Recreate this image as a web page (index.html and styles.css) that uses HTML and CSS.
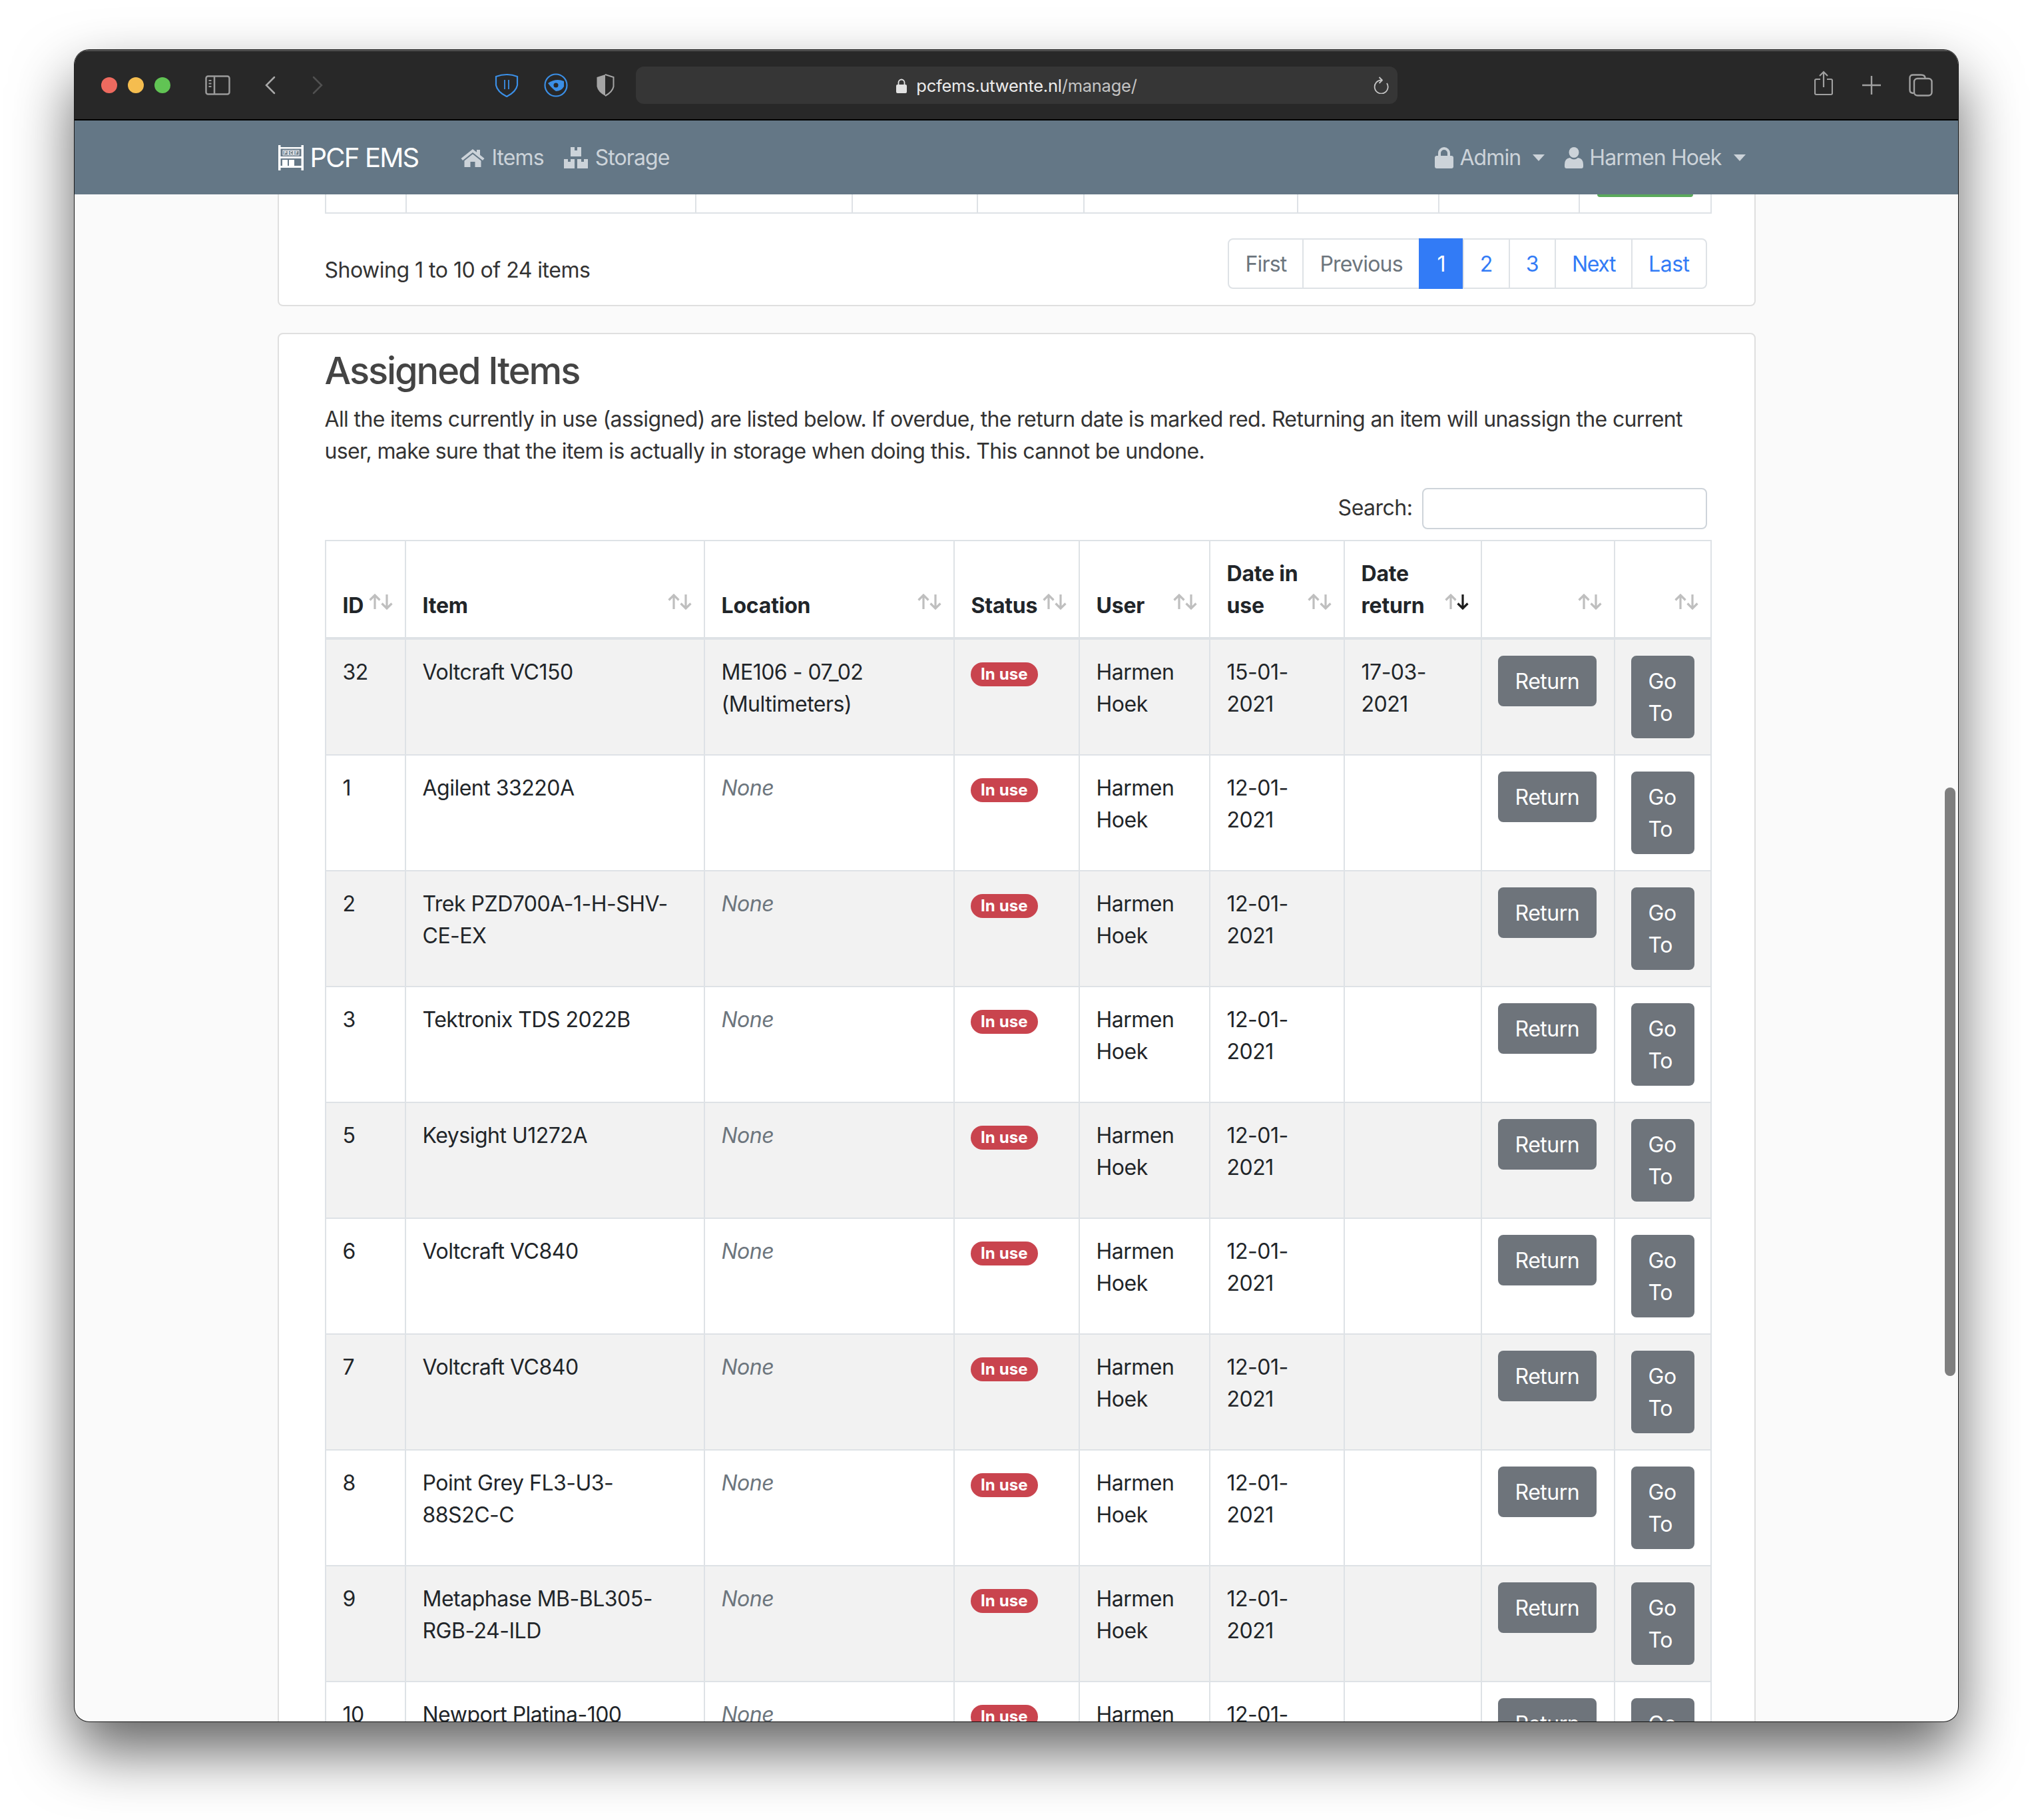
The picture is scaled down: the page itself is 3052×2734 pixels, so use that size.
FILE: index.html
```html
<!DOCTYPE html>
<html lang="en">
<head>
    <meta charset="UTF-8">
    <title>PCF EMS - Manage</title>
    <link rel="stylesheet" href="styles.css">
</head>
<body>
<div class="window">
    <!-- safari toolbar -->
    <div class="toolbar">
        <span class="light light-red"></span>
        <span class="light light-yellow"></span>
        <span class="light light-green"></span>
        <svg class="tb-sidebar" viewBox="0 0 38 30" fill="none" stroke="#9a9a9a" stroke-width="2.5"><rect x="1.5" y="1.5" width="35" height="27" rx="3"/><path d="M14 1.5v27"/><path d="M5.5 8h4M5.5 12.500h4M5.500 17h4" stroke-width="2"/></svg>
        <svg class="tb-back" viewBox="0 0 16 28" fill="none" stroke="#a8a8a8" stroke-width="2.5" stroke-linecap="round"><path d="M14 2 2 14l12 12"/></svg>
        <svg class="tb-forward" viewBox="0 0 16 28" fill="none" stroke="#505050" stroke-width="2.5" stroke-linecap="round"><path d="m2 2 12 12L2 26"/></svg>
        <svg class="tb-shield" viewBox="0 0 36 36" fill="none" stroke="#3b8fe6" stroke-width="2.2"><path d="M2 5q16-6 32 0v13q-2 10-16 17Q4 28 2 18z"/><path d="M15 10v14M21 10v14" stroke-width="1.800"/></svg>
        <svg class="tb-eye" viewBox="0 0 36 36" fill="none"><circle cx="18" cy="18" r="16.500" stroke="#3b8fe6" stroke-width="2.200"/><path d="M6 15q12-8 24-3v8q-4 7-12 7-6-4-12-12z" fill="#3b8fe6"/><circle cx="18" cy="18" r="3.500" fill="#282828"/></svg>
        <svg class="tb-half" viewBox="0 0 28 34" fill="none"><path d="M14 1 1.500 5v14Q3 27 14 33z" fill="#a5a5a5"/><path d="M14 1l12.500 4v14Q25 27 14 33" stroke="#a5a5a5" stroke-width="2"/></svg>
        <div class="address">
            <svg class="addr-lock" viewBox="0 0 16 22"><path d="M3.500 10V6a4.500 4.500 0 0 1 9 0v4" fill="none" stroke="#e2e2e2" stroke-width="1.800"/><rect y="9" width="16" height="13" rx="2" fill="#e2e2e2"/></svg>
            <span class="addr-text">pcfems.utwente.nl<span class="addr-path">/manage/</span></span>
            <svg class="addr-reload" viewBox="0 0 24 26" fill="none" stroke="#c4c4c4" stroke-width="1.800"><path d="M13 5.500A10 10 0 1 0 21 10"/><path d="m9.500 1 4.500 4.500-4.500 4.500" stroke-linejoin="round"/></svg>
        </div>
        <svg class="tb-share" viewBox="0 0 28 38" fill="none" stroke="#a0a0a0" stroke-width="2.200"><path d="M9 13H3a2 2 0 0 0-2 2v19a2 2 0 0 0 2 2h22a2 2 0 0 0 2-2V15a2 2 0 0 0-2-2h-6"/><path d="M14 25V2M8 8l6-6 6 6"/></svg>
        <svg class="tb-plus" viewBox="0 0 28 28" stroke="#a0a0a0" stroke-width="2.400"><path d="M14 0v28M0 14h28"/></svg>
        <svg class="tb-tabs" viewBox="0 0 36 34" fill="none" stroke="#a0a0a0" stroke-width="2.400"><path d="M7 29q-5.500 0-5.500-5V6q0-4.500 5-4.500h12q6 0 6 5"/><rect x="8" y="7" width="26.500" height="25.500" rx="5"/></svg>
    </div>

    <nav class="navbar">
        <div class="nav-inner">
            <a class="brand" href="#">
                <svg class="brand-icon" viewBox="0 0 38 38" fill="#fff">
                    <path d="M0 0h3.500v38H0zM34.500 0H38v38h-3.500zM3 3h32v2.500H3zM3 17h32v3H3zM3 31h32v3H3z"/>
                    <rect x="7" y="8" width="7" height="7" fill="none" stroke="#fff"/><rect x="15.500" y="8" width="7" height="7" fill="none" stroke="#fff"/><rect x="24" y="8" width="7" height="7" fill="none" stroke="#fff"/>
                    <text x="8.500" y="14" class="brand-letter">P</text><text x="17" y="14" class="brand-letter">C</text><text x="25.500" y="14" class="brand-letter">F</text>
                    <rect x="6" y="22" width="8" height="9"/><rect x="16" y="22" width="8" height="9"/>
                </svg>
                PCF EMS
            </a>
            <a class="nav-link" href="#">
                <svg class="icon-home" viewBox="0 0 36 28" fill="currentColor"><path d="M18 1 .5 15 3 18 18 6l15 12 2.500-3-6.500-5.200V2h-5v3.800z"/><path d="M18 8.500 5.500 18.500V28h9v-8h7v8h9v-9.500z"/></svg>
                Items
            </a>
            <a class="nav-link" href="#">
                <svg class="icon-cubes" viewBox="0 0 36 32" fill="currentColor"><path d="M10 0h6v5h4V0h6v14H10zM0 18h6v4h4v-4h6v14H0zM20 18h6v4h4v-4h6v14H20z"/></svg>
                Storage
            </a>
            <div class="nav-right">
                <a class="nav-link" href="#">
                    <svg class="icon-lock" viewBox="0 0 28 32" fill="currentColor"><path d="M7 14V9a7 7 0 0 1 14 0v5" fill="none" stroke="currentColor" stroke-width="4"/><rect y="13" width="28" height="19" rx="3"/></svg>
                    Admin<span class="caret"></span>
                </a>
                <a class="nav-link" href="#">
                    <svg class="icon-user" viewBox="0 0 28 32" fill="currentColor"><ellipse cx="14" cy="8" rx="7.500" ry="8"/><path d="M8 16q6 5 12 0 8 1 8 10v3q0 3-3 3H3q-3 0-3-3v-3q0-9 8-10z"/></svg>
                    Harmen Hoek<span class="caret"></span>
                </a>
            </div>
        </div>
    </nav>

    <div class="content">
        <div class="card card-top">
            <table class="stub-table">
                <tr>
                    <td class="s1"></td><td class="s2"></td><td class="s3"></td><td class="s4"></td><td class="s5"></td><td class="s6"></td><td class="s7"></td><td class="s8"></td><td class="s9"><div class="stub-btn"></div></td>
                </tr>
            </table>
            <div class="table-footer">
                <div class="pagination-info">Showing 1 to 10 of 24 items</div>
                <ul class="pagination">
                    <li class="disabled"><a href="#">First</a></li>
                    <li class="disabled"><a href="#">Previous</a></li>
                    <li class="active"><a href="#">1</a></li>
                    <li><a href="#">2</a></li>
                    <li><a href="#">3</a></li>
                    <li class="next"><a href="#">Next</a></li>
                    <li><a href="#">Last</a></li>
                </ul>
            </div>
        </div>

        <div class="card card-assigned">
            <h3>Assigned Items</h3>
            <p>All the items currently in use (assigned) are listed below. If overdue, the return date is marked red. Returning an item will unassign the current user, make sure that the item is actually in storage when doing this. This cannot be undone.</p>
            <div class="search-row">
                <label for="search">Search:</label>
                <input type="text" id="search">
            </div>
            <table class="items-table">
                <colgroup>
                    <col class="c-id"><col class="c-item"><col class="c-location"><col class="c-status"><col class="c-user"><col class="c-inuse"><col class="c-return"><col class="c-btn"><col class="c-goto">
                </colgroup>
                <thead>
                    <tr>
                        <th>ID<svg class="sort" viewBox="0 0 36 24"><use href="#sort-up"/><use href="#sort-down"/></svg></th>
                        <th>Item<svg class="sort" viewBox="0 0 36 24"><use href="#sort-up"/><use href="#sort-down"/></svg></th>
                        <th>Location<svg class="sort" viewBox="0 0 36 24"><use href="#sort-up"/><use href="#sort-down"/></svg></th>
                        <th>Status<svg class="sort" viewBox="0 0 36 24"><use href="#sort-up"/><use href="#sort-down"/></svg></th>
                        <th>User<svg class="sort" viewBox="0 0 36 24"><use href="#sort-up"/><use href="#sort-down"/></svg></th>
                        <th>Date in use<svg class="sort" viewBox="0 0 36 24"><use href="#sort-up"/><use href="#sort-down"/></svg></th>
                        <th>Date return<svg class="sort sort-active" viewBox="0 0 36 24"><use href="#sort-up"/><use href="#sort-down"/></svg></th>
                        <th><svg class="sort" viewBox="0 0 36 24"><use href="#sort-up"/><use href="#sort-down"/></svg></th>
                        <th><svg class="sort" viewBox="0 0 36 24"><use href="#sort-up"/><use href="#sort-down"/></svg></th>
                    </tr>
                </thead>
                <tbody>
                    <tr><td>32</td><td>Voltcraft VC150</td><td>ME106 - 07_02 (Multimeters)</td><td><span class="badge">In use</span></td><td>Harmen Hoek</td><td>15-01-2021</td><td>17-03-2021</td><td class="btn-cell"><a class="btn" href="#">Return</a></td><td class="btn-cell"><a class="btn" href="#">Go To</a></td></tr>
                    <tr><td>1</td><td>Agilent 33220A</td><td class="none">None</td><td><span class="badge">In use</span></td><td>Harmen Hoek</td><td>12-01-2021</td><td></td><td class="btn-cell"><a class="btn" href="#">Return</a></td><td class="btn-cell"><a class="btn" href="#">Go To</a></td></tr>
                    <tr><td>2</td><td>Trek PZD700A-1-H-SHV-CE-EX</td><td class="none">None</td><td><span class="badge">In use</span></td><td>Harmen Hoek</td><td>12-01-2021</td><td></td><td class="btn-cell"><a class="btn" href="#">Return</a></td><td class="btn-cell"><a class="btn" href="#">Go To</a></td></tr>
                    <tr><td>3</td><td>Tektronix TDS 2022B</td><td class="none">None</td><td><span class="badge">In use</span></td><td>Harmen Hoek</td><td>12-01-2021</td><td></td><td class="btn-cell"><a class="btn" href="#">Return</a></td><td class="btn-cell"><a class="btn" href="#">Go To</a></td></tr>
                    <tr><td>5</td><td>Keysight U1272A</td><td class="none">None</td><td><span class="badge">In use</span></td><td>Harmen Hoek</td><td>12-01-2021</td><td></td><td class="btn-cell"><a class="btn" href="#">Return</a></td><td class="btn-cell"><a class="btn" href="#">Go To</a></td></tr>
                    <tr><td>6</td><td>Voltcraft VC840</td><td class="none">None</td><td><span class="badge">In use</span></td><td>Harmen Hoek</td><td>12-01-2021</td><td></td><td class="btn-cell"><a class="btn" href="#">Return</a></td><td class="btn-cell"><a class="btn" href="#">Go To</a></td></tr>
                    <tr><td>7</td><td>Voltcraft VC840</td><td class="none">None</td><td><span class="badge">In use</span></td><td>Harmen Hoek</td><td>12-01-2021</td><td></td><td class="btn-cell"><a class="btn" href="#">Return</a></td><td class="btn-cell"><a class="btn" href="#">Go To</a></td></tr>
                    <tr><td>8</td><td>Point Grey FL3-U3-88S2C-C</td><td class="none">None</td><td><span class="badge">In use</span></td><td>Harmen Hoek</td><td>12-01-2021</td><td></td><td class="btn-cell"><a class="btn" href="#">Return</a></td><td class="btn-cell"><a class="btn" href="#">Go To</a></td></tr>
                    <tr><td>9</td><td>Metaphase MB-BL305-RGB-24-ILD</td><td class="none">None</td><td><span class="badge">In use</span></td><td>Harmen Hoek</td><td>12-01-2021</td><td></td><td class="btn-cell"><a class="btn" href="#">Return</a></td><td class="btn-cell"><a class="btn" href="#">Go To</a></td></tr>
                    <tr><td>10</td><td>Newport Platina-100</td><td class="none">None</td><td><span class="badge">In use</span></td><td>Harmen Hoek</td><td>12-01-2021</td><td></td><td class="btn-cell"><a class="btn" href="#">Return</a></td><td class="btn-cell"><a class="btn" href="#">Go To</a></td></tr>
                </tbody>
            </table>
        </div>
    </div>

    <div class="scrollbar"></div>
</div>

<svg class="sprites" width="0" height="0">
    <defs>
        <path id="sort-up" d="M9 23V2M1.500 9.500 9 2l7.500 7.500"/>
        <path id="sort-down" d="M27 1v21M19.500 14.500 27 22l7.500-7.500"/>
    </defs>
</svg>
</body>
</html>
```

FILE: styles.css
```css
* {
    box-sizing: border-box;
}

html, body {
    height: 2734px;
    margin: 0;
    overflow: hidden;
    background-color: #ffffff;
}

body {
    padding: 75px 0 0 112px;
    font-family: Inter, "Liberation Sans", sans-serif;
    font-size: 32px;
    line-height: 48px;
    letter-spacing: -0.5px;
    color: #212529;
}

a {
    text-decoration: none;
}

.sprites {
    position: absolute;
}

/* window */

.window {
    position: relative;
    width: 2829px;
    height: 2511px;
    display: flex;
    flex-direction: column;
    overflow: hidden;
    border-radius: 22px;
    background-color: #fafafa;
    box-shadow: 0 0 0 1px rgba(0, 0, 0, 0.85), 0 44px 90px rgba(0, 0, 0, 0.62);
}

/* toolbar */

.toolbar {
    flex: none;
    height: 106px;
    display: flex;
    align-items: center;
    background-color: #282828;
    border-top: 2px solid #525252;
    border-bottom: 2px solid #000000;
    padding-left: 40px;
}

.light {
    width: 24px;
    height: 24px;
    border-radius: 50%;
    margin-right: 16px;
}

.light-red { background-color: #ee6a5f; }
.light-yellow { background-color: #f5bd4f; }
.light-green { background-color: #61c454; }

.tb-sidebar { width: 38px; height: 30px; margin-left: 36px; }
.tb-back { width: 16px; height: 28px; margin-left: 52px; }
.tb-forward { width: 16px; height: 28px; margin-left: 55px; }
.tb-shield { width: 36px; height: 36px; margin-left: 258px; }
.tb-eye { width: 36px; height: 36px; margin-left: 38px; }
.tb-half { width: 28px; height: 34px; margin-left: 42px; }

.address {
    width: 1144px;
    height: 56px;
    margin-left: 32px;
    padding-top: 2px;
    display: flex;
    align-items: center;
    justify-content: center;
    position: relative;
    border-radius: 12px;
    background-color: #363636;
    font-size: 25.5px;
    letter-spacing: -0.25px;
    color: #ececec;
}

.addr-lock {
    width: 16px;
    height: 22px;
    margin-right: 14px;
}

.addr-path {
    color: #c4c4c4;
}

.addr-reload {
    position: absolute;
    right: 13px;
    top: 15px;
    width: 24px;
    height: 26px;
}

.tb-share { width: 28px; height: 38px; margin-left: 626px; margin-top: -6px; }
.tb-plus { width: 28px; height: 28px; margin-left: 44px; }
.tb-tabs { width: 36px; height: 34px; margin-left: 42px; }

/* navbar */

.navbar {
    flex: none;
    height: 111px;
    background-color: #647786;
    display: flex;
    align-items: center;
}

.nav-inner {
    width: 2218px;
    margin: 0 auto;
    display: flex;
    align-items: center;
}

.brand {
    display: flex;
    align-items: center;
    font-size: 40px;
    letter-spacing: -1.8px;
    color: #ffffff;
    margin-right: 64px;
}

.brand-icon {
    width: 38px;
    height: 38px;
    margin-right: 10px;
}

.brand-letter {
    font-size: 6px;
    font-weight: 700;
    letter-spacing: 0;
    fill: #ffffff;
}

.nav-link {
    display: flex;
    align-items: center;
    letter-spacing: -0.9px;
    color: #ccd3d9;
    margin-right: 30px;
}

.nav-right {
    margin-left: auto;
    display: flex;
    align-items: center;
}

.nav-right .nav-link {
    margin-right: 14px;
    margin-left: 16px;
}

.icon-home { width: 36px; height: 28px; margin-right: 10px; }
.icon-cubes { width: 36px; height: 32px; margin-right: 11px; }
.icon-lock, .icon-user { width: 28px; height: 32px; margin-right: 9px; }

.caret {
    width: 0;
    height: 0;
    margin-left: 18px;
    border-top: 10px solid #ccd3d9;
    border-left: 9px solid transparent;
    border-right: 9px solid transparent;
}

/* page content */

.content {
    flex: 1;
    overflow: hidden;
}

.card {
    width: 2220px;
    margin: 0 auto;
    padding: 0 71px 0 69px;
    background-color: #ffffff;
    border: 2px solid #dfdfdf;
    border-radius: 8px;
}

.card-top {
    border-top: none;
    border-radius: 0 0 8px 8px;
    height: 168px;
}

.card-assigned {
    margin-top: 40px;
}

.stub-table {
    table-layout: fixed;
    border-collapse: collapse;
    width: 2081px;
}

.stub-table td {
    height: 28px;
    padding: 0;
    vertical-align: top;
    border: 2px solid #dee2e6;
    border-top: none;
}

.s1 { width: 121px; }
.s2 { width: 435px; }
.s3 { width: 235px; }
.s4 { width: 188px; }
.s5 { width: 160px; }
.s6 { width: 321px; }
.s7 { width: 212px; }
.s8 { width: 211px; }
.s9 { width: 198px; }

.stub-btn {
    width: 144px;
    height: 4px;
    margin-left: 26px;
    background-color: #5aa95c;
    border-radius: 0 0 6px 6px;
}

.table-footer {
    display: flex;
    justify-content: space-between;
    padding-top: 37px;
}

.pagination-info {
    padding-top: 24px;
    color: #333333;
}

.pagination {
    display: flex;
    list-style: none;
    margin: 0;
    padding: 0;
}

.pagination a {
    display: block;
    height: 76px;
    padding: 13px 24px 11px;
    margin-left: -2px;
    color: #327bf6;
    background-color: #ffffff;
    border: 2px solid #dee2e6;
}

.pagination li:first-child a {
    margin-left: 0;
    border-radius: 8px 0 0 8px;
}

.pagination li:last-child a {
    border-radius: 0 8px 8px 0;
}

.pagination .disabled a {
    letter-spacing: -0.8px;
    color: #6c757d;
}

.pagination .next a {
    letter-spacing: -1.4px;
}

.pagination .active a {
    min-width: 68px;
    text-align: center;
    color: #ffffff;
    background-color: #327bf6;
    border-color: #327bf6;
}

h3 {
    margin: 22px 0 15px;
    font-size: 56px;
    font-weight: 500;
    line-height: 67px;
    letter-spacing: -2.1px;
    color: #444444;
}

p {
    margin: 0 0 31px;
    letter-spacing: -0.63px;
    color: #333333;
}

.search-row {
    display: flex;
    justify-content: flex-end;
    align-items: center;
    margin-bottom: 16px;
}

.search-row label {
    margin-right: 14px;
    padding-bottom: 2px;
    color: #333333;
}

.search-row input {
    width: 428px;
    height: 62px;
    border: 2px solid #ced4da;
    border-radius: 8px;
    background-color: #ffffff;
}

/* assigned items table */

.items-table {
    table-layout: fixed;
    border-collapse: collapse;
    width: 2081px;
}

.c-id { width: 120px; }
.c-item { width: 449px; }
.c-location { width: 375px; }
.c-status { width: 188px; }
.c-user { width: 196px; }
.c-inuse { width: 202px; }
.c-return { width: 206px; }
.c-btn { width: 200px; }
.c-goto { width: 145px; }

.items-table th,
.items-table td {
    padding: 25px 24px 23px 25px;
    border: 2px solid #dee2e6;
    text-align: left;
    vertical-align: top;
}

.items-table th {
    position: relative;
    vertical-align: bottom;
    font-weight: 700;
    letter-spacing: -0.2px;
    border-bottom-width: 4px;
}

.items-table td.btn-cell {
    padding: 24px;
}

.items-table tbody tr:nth-child(odd) {
    background-color: #f2f2f2;
}

.sort {
    position: absolute;
    right: 18px;
    bottom: 41px;
    width: 36px;
    height: 24px;
    fill: none;
    stroke: #bfbfbf;
    stroke-width: 3.2px;
}

.sort-active use:last-child {
    stroke: #1c1c1c;
}

.none {
    font-style: italic;
    color: #6c757d;
}

.badge {
    display: inline-block;
    padding: 6px 15.5px;
    margin-top: 9px;
    margin-left: -1px;
    vertical-align: top;
    font-size: 24px;
    font-weight: 700;
    line-height: 24px;
    letter-spacing: 0.1px;
    color: #ffffff;
    background-color: #c9444e;
    border-radius: 20px;
}

.btn {
    display: block;
    width: fit-content;
    padding: 13px 24px 11px;
    color: #ffffff;
    background-color: #6e747b;
    border: 2px solid #6e747b;
    border-radius: 8px;
}

/* overlay scrollbar */

.scrollbar {
    position: absolute;
    left: 2809px;
    top: 1108px;
    width: 16px;
    height: 884px;
    border-radius: 8px;
    background-color: #7f7f7f;
}
```
